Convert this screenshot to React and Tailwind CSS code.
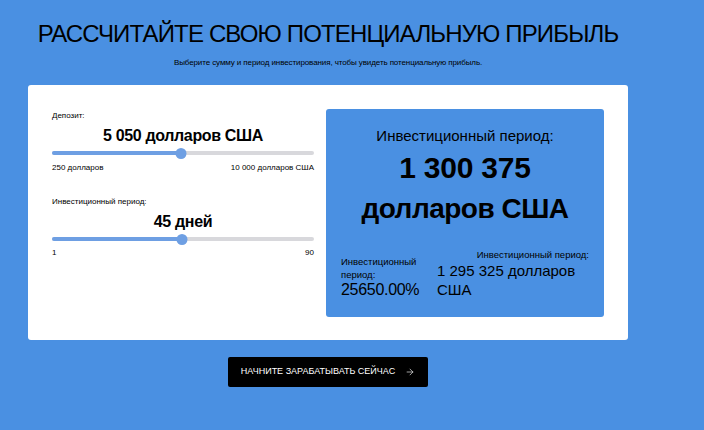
import React, { useState } from 'react';
import { ArrowRight } from 'lucide-react';

const fmt = (n) => n.toLocaleString('ru-RU').replace(/\u00a0|\u202f/g, ' ');

const Slider = ({ value, min, max }) => {
    const pct = ((value - min) / (max - min)) * 100;
    return (
        <div className="relative h-[10px] flex items-center">
            <div className="w-full h-[4px] rounded-full bg-[#d8d8dc]">
                <div className="h-full rounded-full bg-[#6e9fe3]" style={{ width: `${pct}%` }}></div>
            </div>
            <div
                className="absolute w-[11px] h-[11px] rounded-full bg-[#6e9fe3] -translate-x-1/2"
                style={{ left: `${pct}%` }}
            ></div>
        </div>
    );
};

const App = () => {
    const [deposit] = useState(5050);
    const [days] = useState(45);

    return (
        <div className="w-[704px] h-[430px] bg-[#4a90e2] overflow-hidden" style={{ fontFamily: '"Liberation Sans", Arial, sans-serif' }}>
            <div className="ml-[28px] w-[600px] flex flex-col items-center pt-[20px]">
                <h1 className="text-[24px] leading-[28px] text-black tracking-[-0.85px] whitespace-nowrap">
                    РАССЧИТАЙТЕ СВОЮ ПОТЕНЦИАЛЬНУЮ ПРИБЫЛЬ
                </h1>
                <p className="mt-[10px] text-[8px] leading-[10px] text-black tracking-[-0.1px]">
                    Выберите сумму и период инвестирования, чтобы увидеть потенциальную прибыль.
                </p>

                {/* Calculator card */}
                <div className="mt-[17px] w-full bg-white rounded-[3px] flex gap-[12px] px-[24px] pt-[24px] pb-[23px]">
                    <div className="w-[262px] pt-[2px]">
                        <div className="text-[8px] leading-[10px] text-black">Депозит:</div>
                        <div className="mt-[5px] text-center text-[16px] leading-[20px] font-bold text-black tracking-[-0.35px]">
                            {fmt(deposit)} долларов США
                        </div>
                        <div className="mt-[2px]">
                            <Slider value={deposit} min={250} max={10000} />
                        </div>
                        <div className="mt-[5px] flex justify-between text-[8px] leading-[10px] text-black">
                            <span>250 долларов</span>
                            <span>10 000 долларов США</span>
                        </div>

                        <div className="mt-[24px] text-[8px] leading-[10px] text-black">Инвестиционный период:</div>
                        <div className="mt-[5px] text-center text-[16px] leading-[20px] font-bold text-black tracking-[-0.35px]">
                            {days} дней
                        </div>
                        <div className="mt-[2px]">
                            <Slider value={days} min={1} max={90} />
                        </div>
                        <div className="mt-[4px] flex justify-between text-[8px] leading-[10px] text-black">
                            <span>1</span>
                            <span>90</span>
                        </div>
                    </div>

                    {/* Result box */}
                    <div className="w-[278px] h-[208px] bg-[#4a90e2] rounded-[3px] px-[15px] pt-[18px] text-black">
                        <div className="text-center text-[15px] leading-[18px]">Инвестиционный период:</div>
                        <div className="mt-[3px] text-center text-[28px] leading-[40px] font-bold tracking-[-0.5px]">
                            <span className="text-[30px] tracking-[-0.2px]">1 300 375</span><br />долларов США
                        </div>
                        <div className="mt-[20px] flex items-end justify-between">
                            <div className="w-[90px]">
                                <div className="text-[9.5px] leading-[13px]">Инвестиционный период:</div>
                                <div className="text-[16px] leading-[18px] tracking-[-0.3px]">25650.00%</div>
                            </div>
                            <div className="w-[152px]">
                                <div className="text-right text-[9.5px] leading-[12px]">Инвестиционный период:</div>
                                <div className="text-[15px] leading-[19px]">1 295 325 долларов США</div>
                            </div>
                        </div>
                    </div>
                </div>

                <button className="mt-[17px] w-[200px] h-[30px] bg-black rounded-[2px] flex items-center justify-center gap-[10px] text-white text-[9px] uppercase">
                    <span>Начните зарабатывать сейчас</span>
                    <ArrowRight size={10} strokeWidth={1.5} />
                </button>
            </div>
        </div>
    );
};

export default App;
